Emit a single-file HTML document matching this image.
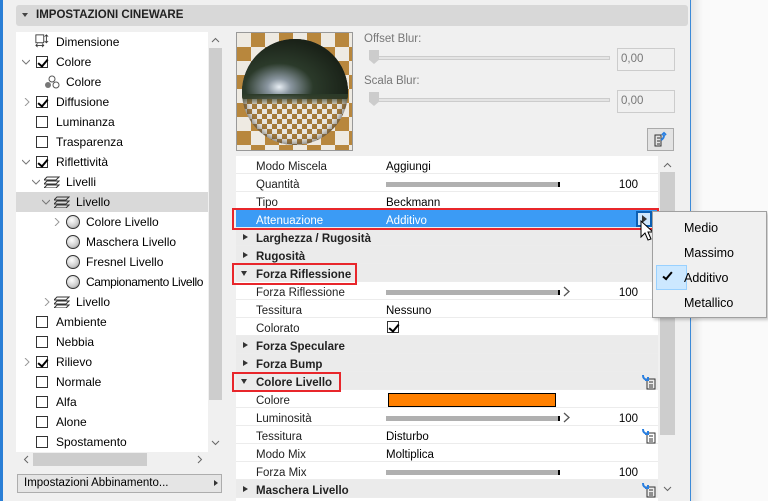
<!DOCTYPE html>
<html><head><meta charset="utf-8"><style>
*{box-sizing:border-box;margin:0;padding:0}
body{width:768px;height:501px;overflow:hidden;background:#f0f0f0;font-family:"Liberation Sans",sans-serif;font-size:12px;color:#000;position:relative}
.a{position:absolute}
.row{position:absolute;left:0;height:20px;line-height:20px;white-space:nowrap}
.cb{position:absolute;width:12px;height:12px;border:1px solid #333;background:#fff;top:4px}
.cb.c::after{content:"";position:absolute;left:3px;top:0px;width:4px;height:8px;border:solid #000;border-width:0 2px 2px 0;transform:rotate(40deg)}
.chev{position:absolute;top:6px;width:8px;height:8px}
.pr{position:absolute;left:236px;width:422px;height:18px;line-height:18px;padding-top:2px;background:#fff;border-bottom:1px solid #ececec;font-size:11.5px}
.pr .k{position:absolute;left:20px;top:2px;color:#222}
.pr .v{position:absolute;left:150px;top:2px}
.pr .n{position:absolute;right:20px;top:2px}
.pr.h{background:#ebebeb;font-weight:bold}
.tri{position:absolute;left:7px;top:6px;width:0;height:0;border-left:5px solid #333;border-top:3.5px solid transparent;border-bottom:3.5px solid transparent}
.trd{position:absolute;left:5px;top:7px;width:0;height:0;border-top:5px solid #333;border-left:3.5px solid transparent;border-right:3.5px solid transparent}
.bar{position:absolute;left:150px;top:8px;width:174px;height:5px;background:#b0b0b0;border-right:2px solid #000}
.red{position:absolute;border:2px solid #e8262b}
.ball{position:absolute;width:14px;height:14px;border-radius:50%;border:1px solid #333;background:radial-gradient(circle at 40% 35%,#fff,#ccc 60%,#888);top:3px}
.lay{position:absolute;top:4px;width:16px;height:12px}
.ic{position:absolute;width:16px;height:14px}
</style></head><body>
<div class="a" style="left:0;top:0;width:3px;height:501px;background:#2a7fd6"></div>
<div class="a" style="left:690px;top:0;width:1px;height:501px;background:#3c8ad8"></div>
<div class="a" style="left:691px;top:0;width:77px;height:501px;background:#fafafa"></div>
<div class="a" style="left:691px;top:0;width:12px;height:501px;background:linear-gradient(90deg,#e4e4e4,#fafafa)"></div>

<div class="a" style="left:16px;top:5px;width:672px;height:21px;background:#d8d8d8;border-radius:3px"></div>
<div class="a" style="left:22px;top:13px;border-top:4px solid #444;border-left:3px solid transparent;border-right:3px solid transparent"></div>
<div class="a" style="left:36px;top:9px;font-weight:bold;font-size:11.5px;color:#222">IMPOSTAZIONI CINEWARE</div>

<div class="a" style="left:16px;top:32px;width:192px;height:420px;background:#fff;overflow:hidden;font-size:12px">
 <div class="row" style="top:0;width:192px"><svg class="ic" style="left:18px;top:2px" width="16" height="16" viewBox="0 0 16 16"><rect x="1" y="1" width="9" height="9" fill="none" stroke="#333"/><path d="M13 1v9M11 3l2-2 2 2M11 8l2 2 2-2M1 13h9M3 11l-2 2 2 2M8 11l2 2-2 2" stroke="#333" fill="none"/></svg><span style="position:absolute;left:40px">Dimensione</span></div>
 <div class="row" style="top:20px"><svg class="chev" style="left:6px"><path d="M0 2l4 4 4-4" fill="none" stroke="#777"/></svg><div class="cb c" style="left:20px"></div><span style="position:absolute;left:40px">Colore</span></div>
 <div class="row" style="top:40px"><svg class="ic" style="left:28px;top:3px" width="16" height="14"><circle cx="8" cy="4" r="3" fill="none" stroke="#555"/><circle cx="4" cy="10" r="3" fill="#777"/><circle cx="12" cy="10" r="3" fill="none" stroke="#555"/></svg><span style="position:absolute;left:50px">Colore</span></div>
 <div class="row" style="top:60px"><svg class="chev" style="left:7px"><path d="M2 0l4 4-4 4" fill="none" stroke="#999"/></svg><div class="cb c" style="left:20px"></div><span style="position:absolute;left:40px">Diffusione</span></div>
 <div class="row" style="top:80px"><div class="cb" style="left:20px"></div><span style="position:absolute;left:40px">Luminanza</span></div>
 <div class="row" style="top:100px"><div class="cb" style="left:20px"></div><span style="position:absolute;left:40px">Trasparenza</span></div>
 <div class="row" style="top:120px"><svg class="chev" style="left:6px"><path d="M0 2l4 4 4-4" fill="none" stroke="#777"/></svg><div class="cb c" style="left:20px"></div><span style="position:absolute;left:40px">Riflettività</span></div>
 <div class="row" style="top:140px"><svg class="chev" style="left:16px"><path d="M0 2l4 4 4-4" fill="none" stroke="#777"/></svg><svg class="lay" style="left:28px" viewBox="0 0 16 12"><path d="M3 1h12l-3 3H0zM3 5h12l-3 3H0zM3 9h12l-3 3H0z" fill="none" stroke="#333"/></svg><span style="position:absolute;left:50px">Livelli</span></div>
 <div class="row" style="top:160px;width:192px;background:#d9d9d9"><svg class="chev" style="left:26px"><path d="M0 2l4 4 4-4" fill="none" stroke="#777"/></svg><svg class="lay" style="left:38px" viewBox="0 0 16 12"><path d="M3 1h12l-3 3H0zM3 5h12l-3 3H0zM3 9h12l-3 3H0z" fill="none" stroke="#333"/></svg><span style="position:absolute;left:60px">Livello</span></div>
 <div class="row" style="top:180px"><svg class="chev" style="left:37px"><path d="M2 0l4 4-4 4" fill="none" stroke="#999"/></svg><div class="ball" style="left:50px"></div><span style="position:absolute;left:70px">Colore Livello</span></div>
 <div class="row" style="top:200px"><div class="ball" style="left:50px"></div><span style="position:absolute;left:70px">Maschera Livello</span></div>
 <div class="row" style="top:220px"><div class="ball" style="left:50px"></div><span style="position:absolute;left:70px">Fresnel Livello</span></div>
 <div class="row" style="top:240px"><div class="ball" style="left:50px"></div><span style="position:absolute;left:70px;letter-spacing:-0.4px">Campionamento Livello</span></div>
 <div class="row" style="top:260px"><svg class="chev" style="left:27px"><path d="M2 0l4 4-4 4" fill="none" stroke="#999"/></svg><svg class="lay" style="left:38px" viewBox="0 0 16 12"><path d="M3 1h12l-3 3H0zM3 5h12l-3 3H0zM3 9h12l-3 3H0z" fill="none" stroke="#333"/></svg><span style="position:absolute;left:60px">Livello</span></div>
 <div class="row" style="top:280px"><div class="cb" style="left:20px"></div><span style="position:absolute;left:40px">Ambiente</span></div>
 <div class="row" style="top:300px"><div class="cb" style="left:20px"></div><span style="position:absolute;left:40px">Nebbia</span></div>
 <div class="row" style="top:320px"><svg class="chev" style="left:7px"><path d="M2 0l4 4-4 4" fill="none" stroke="#999"/></svg><div class="cb c" style="left:20px"></div><span style="position:absolute;left:40px">Rilievo</span></div>
 <div class="row" style="top:340px"><div class="cb" style="left:20px"></div><span style="position:absolute;left:40px">Normale</span></div>
 <div class="row" style="top:360px"><div class="cb" style="left:20px"></div><span style="position:absolute;left:40px">Alfa</span></div>
 <div class="row" style="top:380px"><div class="cb" style="left:20px"></div><span style="position:absolute;left:40px">Alone</span></div>
 <div class="row" style="top:400px"><div class="cb" style="left:20px"></div><span style="position:absolute;left:40px">Spostamento</span></div>
</div>
<div class="a" style="left:208px;top:32px;width:15px;height:420px;background:#f0f0f0"></div>
<div class="a" style="left:209px;top:48px;width:13px;height:352px;background:#cdcdcd"></div>
<svg class="a" style="left:211px;top:37px" width="9" height="6"><path d="M1 5l3.5-3.5L8 5" fill="none" stroke="#666"/></svg>
<svg class="a" style="left:211px;top:440px" width="9" height="6"><path d="M1 1l3.5 3.5L8 1" fill="none" stroke="#666"/></svg>
<div class="a" style="left:33px;top:453px;width:114px;height:13px;background:#cdcdcd"></div>
<svg class="a" style="left:23px;top:455px" width="6" height="9"><path d="M5 1L1.5 4.5 5 8" fill="none" stroke="#666"/></svg>
<svg class="a" style="left:197px;top:455px" width="6" height="9"><path d="M1 1l3.5 3.5L1 8" fill="none" stroke="#666"/></svg>
<div class="a" style="left:17px;top:474px;width:205px;height:19px;background:#e5e5e5;border:1px solid #adadad;font-size:11.5px;line-height:17px;padding-left:6px">Impostazioni Abbinamento...</div>
<div class="a" style="left:214px;top:480px;border-left:4px solid #333;border-top:3px solid transparent;border-bottom:3px solid transparent"></div>

<div class="a" style="left:236px;top:32px;width:117px;height:119px;border:1px solid #999;overflow:hidden;background:repeating-conic-gradient(#b8873d 0 25%,#eeeae2 0 50%) 0 0/28px 28px">
 <div class="a" style="left:5px;top:6px;width:106px;height:106px;border-radius:50%;overflow:hidden;background:repeating-conic-gradient(#a57a3a 0 25%,#e8e6e0 0 50%) 0 0/10px 10px;box-shadow:inset 0 0 8px #444">
  <div class="a" style="left:0;top:0;width:106px;height:60px;background:radial-gradient(ellipse at 35% 80%,#e8eef4 0,#8a96a0 12%,#2b3a2a 35%,#1a2218 70%),#222"></div>
  <div class="a" style="left:0;top:55px;width:106px;height:10px;background:linear-gradient(#2a3a28,rgba(120,100,60,.3))"></div>
 </div>
</div>
<div class="a" style="left:364px;top:33px;color:#777;font-size:11.5px">Offset Blur:</div>
<div class="a" style="left:370px;top:56px;width:240px;height:4px;background:#e4e4e4;border:1px solid #ccc"></div>
<div class="a" style="left:369px;top:50px;width:10px;height:14px;background:#ccc;clip-path:polygon(0 0,100% 0,100% 70%,50% 100%,0 70%)"></div>
<div class="a" style="left:617px;top:48px;width:58px;height:23px;border:1px solid #ccc;color:#777;font-size:11.5px;line-height:21px;padding-left:3px">0,00</div>
<div class="a" style="left:364px;top:75px;color:#777;font-size:11.5px">Scala Blur:</div>
<div class="a" style="left:370px;top:98px;width:240px;height:4px;background:#e4e4e4;border:1px solid #ccc"></div>
<div class="a" style="left:369px;top:92px;width:10px;height:14px;background:#ccc;clip-path:polygon(0 0,100% 0,100% 70%,50% 100%,0 70%)"></div>
<div class="a" style="left:617px;top:90px;width:58px;height:23px;border:1px solid #ccc;color:#777;font-size:11.5px;line-height:21px;padding-left:3px">0,00</div>
<div class="a" style="left:647px;top:128px;width:27px;height:23px;border:1px solid #aaa;background:#e3e3e3"><svg width="25" height="21"><path d="M7 6h6v11H7zM9 9h3M9 12h3M9 15h3" fill="none" stroke="#333"/><path d="M13 11c2-1 3-3 3-5M14 6l2-2 2 2" stroke="#2a7fe0" stroke-width="2" fill="none"/></svg></div>

<div class="a" style="left:236px;top:156px;width:422px;height:345px;background:#fff"></div>
<div class="pr" style="top:156px"><span class="k">Modo Miscela</span><span class="v">Aggiungi</span></div>
<div class="pr" style="top:174px"><span class="k">Quantità</span><div class="bar"></div><span class="n">100</span></div>
<div class="pr" style="top:192px"><span class="k">Tipo</span><span class="v">Beckmann</span></div>
<div class="pr" style="top:210px;background:#3b9bf5;color:#fff"><span class="k" style="color:#fff">Attenuazione</span><span class="v">Additivo</span><div class="a" style="left:400px;top:1px;width:16px;height:16px;border:2px solid #0c5fb3;background:#cfe6fb"></div><div class="a" style="left:406px;top:5px;border-left:5px solid #333;border-top:4px solid transparent;border-bottom:4px solid transparent"></div></div>
<div class="pr h" style="top:228px"><div class="tri"></div><span class="k">Larghezza / Rugosità</span></div>
<div class="pr h" style="top:246px"><div class="tri"></div><span class="k">Rugosità</span></div>
<div class="pr h" style="top:264px"><div class="trd"></div><span class="k">Forza Riflessione</span></div>
<div class="pr" style="top:282px"><span class="k">Forza Riflessione</span><div class="bar"></div><svg class="a" style="left:327px;top:4px" width="8" height="11"><path d="M1 1l5 4.5L1 10" fill="none" stroke="#555" stroke-width="1.3"/></svg><span class="n">100</span></div>
<div class="pr" style="top:300px"><span class="k">Tessitura</span><span class="v">Nessuno</span></div>
<div class="pr" style="top:318px"><span class="k">Colorato</span><div class="cb c" style="left:151px;top:3px"></div></div>
<div class="pr h" style="top:336px"><div class="tri"></div><span class="k">Forza Speculare</span></div>
<div class="pr h" style="top:354px"><div class="tri"></div><span class="k">Forza Bump</span></div>
<div class="pr h" style="top:372px"><div class="trd"></div><span class="k">Colore Livello</span></div>
<div class="pr" style="top:390px"><span class="k">Colore</span><div class="a" style="left:152px;top:3px;width:168px;height:14px;background:#ff8000;border:1px solid #000"></div></div>
<div class="pr" style="top:408px"><span class="k">Luminosità</span><div class="bar"></div><svg class="a" style="left:327px;top:4px" width="8" height="11"><path d="M1 1l5 4.5L1 10" fill="none" stroke="#555" stroke-width="1.3"/></svg><span class="n">100</span></div>
<div class="pr" style="top:426px"><span class="k">Tessitura</span><span class="v">Disturbo</span></div>
<div class="pr" style="top:444px"><span class="k">Modo Mix</span><span class="v">Moltiplica</span></div>
<div class="pr" style="top:462px"><span class="k">Forza Mix</span><div class="bar"></div><span class="n">100</span></div>
<div class="pr h" style="top:480px"><div class="tri"></div><span class="k">Maschera Livello</span></div>
<div class="a" style="left:659px;top:156px;width:17px;height:345px;background:#f0f0f0"></div>
<div class="a" style="left:660px;top:172px;width:15px;height:263px;background:#cdcdcd"></div>
<svg class="a" style="left:663px;top:162px" width="9" height="6"><path d="M1 5l3.5-3.5L8 5" fill="none" stroke="#666"/></svg>
<svg class="a" style="left:663px;top:486px" width="9" height="6"><path d="M1 1l3.5 3.5L8 1" fill="none" stroke="#666"/></svg>
<svg class="a" style="left:641px;top:374px" width="16" height="16"><path d="M6 5h8v10H6zM8 8h4M8 11h4M8 13h4" fill="none" stroke="#333"/><path d="M2 1c0 3 1 4 4 5M4 6h3v-3" stroke="#2a7fe0" stroke-width="2" fill="none"/></svg>
<svg class="a" style="left:641px;top:428px" width="16" height="16"><path d="M6 5h8v10H6zM8 8h4M8 11h4M8 13h4" fill="none" stroke="#333"/><path d="M2 1c0 3 1 4 4 5M4 6h3v-3" stroke="#2a7fe0" stroke-width="2" fill="none"/></svg>
<svg class="a" style="left:641px;top:482px" width="16" height="16"><path d="M6 5h8v10H6zM8 8h4M8 11h4M8 13h4" fill="none" stroke="#333"/><path d="M2 1c0 3 1 4 4 5M4 6h3v-3" stroke="#2a7fe0" stroke-width="2" fill="none"/></svg>

<div class="red" style="left:232px;top:208px;width:427px;height:22px"></div>
<div class="red" style="left:232px;top:263px;width:125px;height:22px"></div>
<div class="red" style="left:232px;top:372px;width:109px;height:20px"></div>

<svg class="a" style="left:640px;top:220px" width="14" height="22"><path d="M1 1v16l4-4 3 7 3-1-3-7h5z" fill="#fff" stroke="#000"/></svg>

<div class="a" style="left:652px;top:211px;width:115px;height:107px;background:#f0f0f0;border:1px solid #a0a0a0;box-shadow:2px 2px 3px rgba(0,0,0,.2)"></div>
<div class="a" style="left:656px;top:265px;width:31px;height:25px;background:#cce8ff;border:1px solid #99d1ff"></div>
<div class="a" style="left:665px;top:270px;width:5px;height:10px;border:solid #000;border-width:0 2px 2px 0;transform:rotate(40deg)"></div>
<div class="a" style="left:684px;top:221px;font-size:12.5px">Medio</div>
<div class="a" style="left:684px;top:246px;font-size:12.5px">Massimo</div>
<div class="a" style="left:684px;top:271px;font-size:12.5px">Additivo</div>
<div class="a" style="left:684px;top:296px;font-size:12.5px">Metallico</div>
</body></html>
